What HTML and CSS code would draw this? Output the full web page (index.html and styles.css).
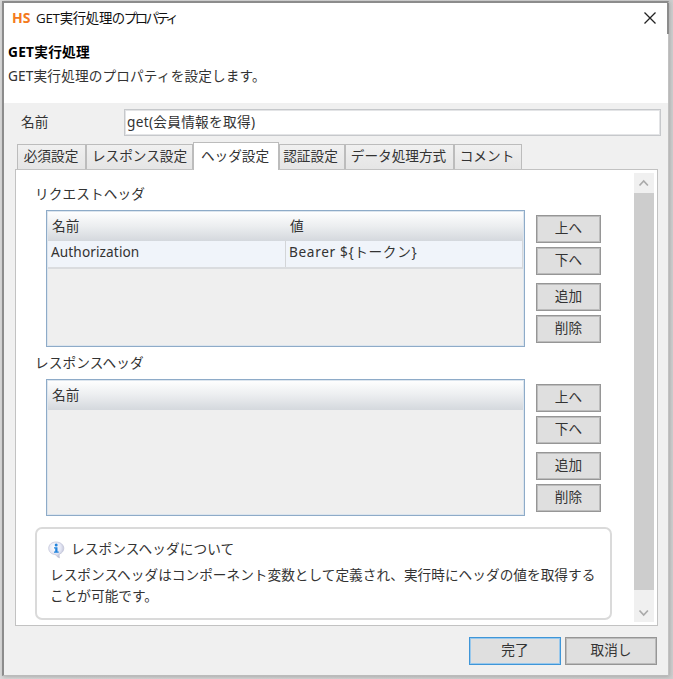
FILE: index.html
```
<!DOCTYPE html>
<html lang="ja">
<head>
<meta charset="utf-8">
<title>GET実行処理のプロパティ</title>
<link rel="stylesheet" href="styles.css">
</head>
<body>
<main class="dialog">
  <header class="head">
    <div class="titlebar">
      <span class="logo">HS</span>
      <span class="title">GET実行処理の<span class="narrow">プロパティ</span></span>
      <svg class="close" width="12" height="12" viewBox="0 0 12 12"><path d="M.5.5l11 11M11.5.5l-11 11" fill="none" stroke="#222" stroke-width="1.3"/></svg>
    </div>
    <h1>GET実行処理</h1>
    <p class="lead">GET実行処理のプロパティを設定します。</p>
  </header>
  <div class="namerow"><label>名前</label><div class="field">get(会員情報を取得)</div></div>
  <nav class="tabs">
    <div class="tab t1">必須設定</div>
    <div class="tab t2">レスポンス設定</div>
    <div class="tab t3 active">ヘッダ設定</div>
    <div class="tab t4">認証設定</div>
    <div class="tab t5">データ処理方式</div>
    <div class="tab t6">コメント</div>
  </nav>
  <section class="panel">
    <div class="content">
      <h2>リクエストヘッダ</h2>
      <div class="group">
        <div class="table">
          <div class="thead"><span class="c1">名前</span><span class="c2">値</span></div>
          <div class="row"><span class="c1">Authorization</span><span class="c2">Bearer ${トークン}</span></div>
        </div>
        <div class="buttons">
          <button>上へ</button><button>下へ</button><button class="gap">追加</button><button>削除</button>
        </div>
      </div>
      <h2>レスポンスヘッダ</h2>
      <div class="group">
        <div class="table"><div class="thead"><span class="c1">名前</span></div></div>
        <div class="buttons">
          <button>上へ</button><button>下へ</button><button class="gap">追加</button><button>削除</button>
        </div>
      </div>
      <div class="info">
        <div class="infohead">
          <svg width="17" height="18" viewBox="0 0 17 18">
            <defs><radialGradient id="bubble" cx=".4" cy=".35" r=".7"><stop offset="0" stop-color="#fff"/><stop offset=".6" stop-color="#e3e5f3"/><stop offset="1" stop-color="#b5b8cf"/></radialGradient></defs>
            <path d="M8 1C3.600 1 .7 3.800 .7 7.300s3 6.200 6.800 6.200c.8 1.500 2 2.700 4 3.300-.5-1.200-.5-2.400-.2-3.700 2.600-.9 4.500-3 4.500-5.800C15.800 3.800 12.400 1 8 1z" fill="url(#bubble)" stroke="#bfc1d6" stroke-width=".7"/>
            <circle cx="8.200" cy="3.900" r="1.500" fill="#2384dc"/>
            <path d="M6 6.300h3.500v4.200h1.200v1.200H6v-1.200h1.200V7.500H6z" fill="#2384dc"/>
          </svg>
          <span>レスポンスヘッダについて</span>
        </div>
        <p>レスポンスヘッダはコンポーネント変数として定義され、実行時にヘッダの値を取得する<br>ことが可能です。</p>
      </div>
    </div>
    <div class="scrollbar">
      <svg width="20" height="20" viewBox="0 0 20 20"><path d="M5.500 12.500L9.700 8l4.200 4.500" fill="none" stroke="#aaa" stroke-width="1.700"/></svg>
      <div class="thumb"></div>
      <svg class="down" width="20" height="20" viewBox="0 0 20 20"><path d="M5.500 8.500L9.700 13l4.200-4.500" fill="none" stroke="#aaa" stroke-width="1.700"/></svg>
    </div>
  </section>
  <footer class="footer"><button class="primary">完了</button><button>取消し</button></footer>
</main>
</body>
</html>
```
FILE: styles.css
```
* { box-sizing: border-box; }
body {
  margin: 0;
  width: 673px;
  height: 679px;
  overflow: hidden;
  padding: 1px 0 0 2px;
  background: linear-gradient(90deg, #dadada 0 4px, #cfcfcf 100%);
  font-family: "Noto Sans", "Noto Sans CJK JP", sans-serif;
  font-size: 13.65px;
  line-height: 20px;
  color: #333;
}
.dialog {
  width: 667px;
  height: 675px;
  background: #f0f0f0;
  border: 2px solid #8c8c8c;
  border-width: 2px 1px 1px 2px;
  border-right-color: #c2c2c2;
  border-bottom-color: #bbb;
  box-shadow: 1px 1px 4px #aaa;
}
.head { height: 100px; background: #fff; }
.titlebar {
  display: flex;
  align-items: center;
  height: 31px;
  padding: 0 11px 2px 8px;
  width: 665px;
  border-right: 2px solid #8c8c8c;
}
.logo { font: bold 14px/20px "Noto Sans", sans-serif; color: #f47a20; width: 24px; }
.title {
  font-family: "Open Sans", "Noto Sans CJK JP", sans-serif;
  font-size: 13.4px;
  font-feature-settings: "palt";
  letter-spacing: -.3px;
  color: #111;
}
.narrow { letter-spacing: -1.9px; }
.close { margin-left: auto; }
h1, h2, p { margin: 0; font-weight: 400; font-size: inherit; }
h1 { font-weight: 700; color: #000; font-size: 13.7px; letter-spacing: .25px; padding: 8px 0 0 4px; }
.lead { padding: 4px 0 0 4px; letter-spacing: .15px; }
.namerow { display: flex; height: 39px; padding: 6px 0 0 17px; line-height: 25px; }
.namerow label { width: 103px; }
.field { width: 537px; height: 27px; background: #fff; border: 1px solid #c6c8cb; padding-left: 2px; line-height: 24px; letter-spacing: .3px; outline: 1px solid #e3e4e6; outline-offset: -2px; }
.tabs { display: flex; align-items: flex-end; height: 27px; padding-left: 13px; }
.tab {
  height: 25px;
  border: 1px solid #bcbcbc;
  border-bottom: 0;
  background: linear-gradient(#f0f0f0, #e5e5e5);
  line-height: 22px;
  text-align: center;
  white-space: nowrap;
}
.t1 { width: 69px; padding-right: 1px; }
.t2 { width: 107px; }
.t3 { width: 86px; padding-right: 2px; }
.t4 { width: 66px; padding-right: 3px; }
.t5 { width: 109px; padding-right: 2px; }
.t6 { width: 68px; padding-right: 2px; }
.tab.active { height: 28px; background: #fff; position: relative; top: 1px; line-height: 25px; }
.panel {
  display: flex;
  width: 643px;
  height: 457px;
  margin-left: 11px;
  padding: 3px 3px 3px 0;
  background: #fff;
  border: 1px solid #c2c2c2;
}
.content { width: 618px; padding: 0 0 0 19px; }
h2 { height: 32px; padding-top: 6px; letter-spacing: .1px; }
h2:first-child { height: 37px; padding-top: 11px; }
.group { display: flex; height: 137px; padding-left: 11px; }
.table { width: 479px; height: 137px; border: 1px solid #8eabc8; background: #efefef; outline: 1px solid #dce5ee; outline-offset: -2px; }
.thead { display: flex; height: 30px; padding-left: 5px; line-height: 30px; background: linear-gradient(#fff, #eceef0 50%, #d4d8dd); }
.thead .c1 { width: 238px; }
.row { display: flex; height: 28px; width: 476px; background: #f0f4fa; border-bottom: 2px solid #dadcdf; border-right: 1px solid #d5d7da; line-height: 21px; }
.row .c1 { width: 239px; padding-left: 4px; letter-spacing: .1px; border-right: 1px solid #d3d5d8; }
.row .c2 { padding-left: 3px; letter-spacing: .65px; }
.buttons { display: flex; flex-direction: column; gap: 4px; padding: 5px 0 0 11px; }
button {
  font: inherit;
  color: #333;
  width: 65px;
  height: 28px;
  padding: 0 0 2px;
  border: 1px solid #969696;
  outline: 1px solid #bcbcbc;
  outline-offset: -2px;
  background: #dfdfdf;
}
.buttons .gap { margin-top: 4px; }
.info {
  width: 577px;
  height: 93px;
  margin-top: 11px;
  padding: 10px 0 0 13px;
  border: 2px solid #dadada;
  border-radius: 7px;
  white-space: nowrap;
}
.infohead { display: flex; gap: 6px; height: 25px; margin-left: -2px; letter-spacing: .1px; }
.infohead svg { margin-top: 2px; }
.info p { line-height: 21px; letter-spacing: .03px; }
.scrollbar { display: flex; flex-direction: column; width: 20px; height: 449px; background: #f0f0f0; }
.thumb { height: 397px; background: #cdcdcd; }
.down { margin-top: auto; }
.footer { display: flex; gap: 4px; justify-content: flex-end; padding: 11px 11px 0 0; }
.footer button { width: 92px; }
.footer .primary { border-color: #3f96d8; outline-color: #99c8ec; }
```
